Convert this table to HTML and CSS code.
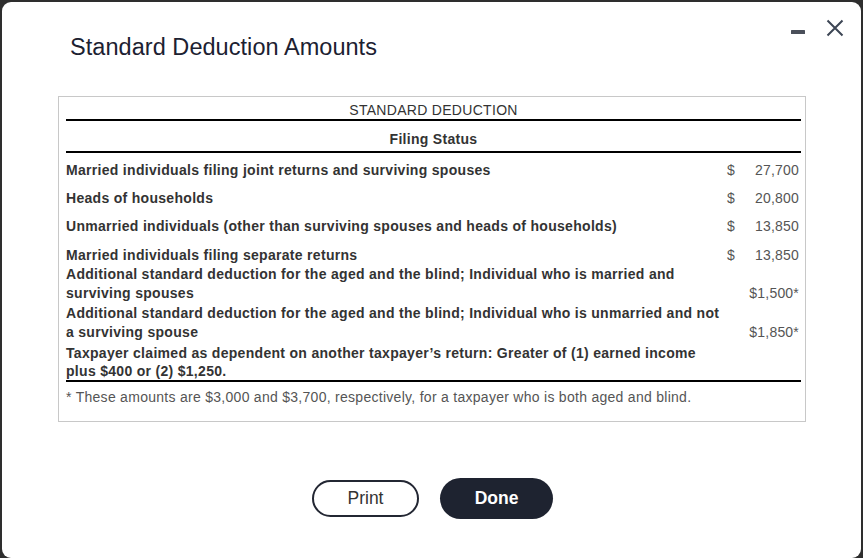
FILE: index.html
```html
<!DOCTYPE html>
<html>
<head>
<meta charset="utf-8">
<link rel="stylesheet" href="styles.css">
</head>
<body>
<div class="dialog">
  <div class="header">
    <h1 class="title">Standard Deduction Amounts</h1>
    <div class="controls">
      <svg class="min" width="16" height="6" viewBox="0 0 16 6"><rect x="1" y="1" width="14" height="4" rx="0.5" fill="#4a4f5a"/></svg>
      <svg class="close" width="18" height="18" viewBox="0 0 18 18"><path d="M1.5 1.5 L16.5 16.5 M16.5 1.5 L1.5 16.5" stroke="#3d4655" stroke-width="2" fill="none"/></svg>
    </div>
  </div>
  <div class="tablebox">
    <div class="caption">STANDARD DEDUCTION</div>
    <div class="subhead">Filing Status</div>
    <table class="tbl">
      <tr class="r-main">
        <td class="label">Married individuals filing joint returns and surviving spouses</td>
        <td class="dollar">$</td><td class="amt">27,700</td>
      </tr>
      <tr class="r-main">
        <td class="label">Heads of households</td>
        <td class="dollar">$</td><td class="amt">20,800</td>
      </tr>
      <tr class="r-main">
        <td class="label">Unmarried individuals (other than surviving spouses and heads of households)</td>
        <td class="dollar">$</td><td class="amt">13,850</td>
      </tr>
      <tr class="r-four">
        <td class="label">Married individuals filing separate returns</td>
        <td class="dollar">$</td><td class="amt">13,850</td>
      </tr>
      <tr class="r-add">
        <td class="label">Additional standard deduction for the aged and the blind; Individual who is married and surviving spouses</td>
        <td class="amt" colspan="2">$1,500*</td>
      </tr>
      <tr class="r-add">
        <td class="label">Additional standard deduction for the aged and the blind; Individual who is unmarried and not a surviving spouse</td>
        <td class="amt" colspan="2">$1,850*</td>
      </tr>
      <tr class="r-last">
        <td class="label">Taxpayer claimed as dependent on another taxpayer’s return: Greater of (1) earned income plus $400 or (2) $1,250.</td>
        <td colspan="2"></td>
      </tr>
    </table>
    <div class="footnote">* These amounts are $3,000 and $3,700, respectively, for a taxpayer who is both aged and blind.</div>
  </div>
  <div class="actions">
    <button class="btn btn-outline">Print</button>
    <button class="btn btn-solid">Done</button>
  </div>
</div>
</body>
</html>
```
FILE: styles.css
```css
html, body {
  margin: 0;
  padding: 0;
  background: #2e2e2e;
  height: 558px;
  overflow: hidden;
}
body {
  font-family: "Liberation Sans", Arial, sans-serif;
  padding: 2px 2px 0 2px;
  box-sizing: border-box;
}
.dialog {
  background: #fff;
  width: 859px;
  height: 556px;
  border-radius: 9px;
  position: relative;
}
.header {
  display: flex;
  justify-content: space-between;
  align-items: flex-start;
  padding: 0 17px 0 68px;
  height: 94px;
}
.title {
  margin: 32px 0 0 0;
  font-size: 23.5px;
  font-weight: normal;
  color: #1c2131;
  line-height: 26px;
  letter-spacing: 0.05px;
}
.controls {
  display: flex;
  align-items: flex-start;
  gap: 20px;
  padding-top: 17px;
}
.min { margin-top: 10px; margin-left: 1px; }
.tablebox {
  margin: 0 0 0 56px;
  width: 748px;
  height: 326px;
  box-sizing: border-box;
  border: 1px solid #c8c8c8;
  padding: 0 4px 0 7px;
  color: #333;
}
.caption {
  text-align: center;
  font-size: 14px;
  letter-spacing: 0.3px;
  line-height: 16px;
  padding: 5px 0 1px;
  border-bottom: 2px solid #000;
  color: #333;
}
.subhead {
  text-align: center;
  font-size: 14px;
  font-weight: bold;
  letter-spacing: 0.3px;
  line-height: 16px;
  padding: 10px 0 4px;
  border-bottom: 2px solid #000;
  color: #333;
}
.tbl {
  width: 100%;
  border-collapse: collapse;
  border-bottom: 2px solid #000;
}
.tbl td {
  padding: 0;
  vertical-align: bottom;
  line-height: 19px;
}
.label {
  width: 656px;
  font-size: 14px;
  font-weight: bold;
  letter-spacing: 0.3px;
  color: #333;
}
.dollar {
  font-size: 14px;
  color: #555;
  padding-left: 5px !important;
}
.amt {
  font-size: 14px;
  color: #555;
  text-align: right;
  padding-right: 2px !important;
  letter-spacing: 0.2px;
}
.r-main td { padding-top: 8px; padding-bottom: 1px; }
.r-four td { padding-top: 9px; }
.r-add td { padding-bottom: 1px; }
.r-last td { padding-top: 1px; }
.r-last .label { line-height: 18px; }
.footnote {
  font-size: 14px;
  color: #555;
  line-height: 16px;
  padding-top: 7px;
  letter-spacing: 0.28px;
}
.actions {
  display: flex;
  justify-content: center;
  align-items: center;
  gap: 21px;
  margin-top: 56px;
  padding-left: 2px;
}
.btn {
  font-family: "Liberation Sans", Arial, sans-serif;
  border-radius: 21px;
  cursor: pointer;
}
.btn-outline {
  width: 107px;
  height: 37px;
  background: #fff;
  border: 2px solid #232733;
  color: #333;
  font-size: 17.5px;
}
.btn-solid {
  width: 113px;
  height: 41px;
  background: #1e2330;
  border: none;
  color: #fff;
  font-size: 17.5px;
  font-weight: bold;
}
```
